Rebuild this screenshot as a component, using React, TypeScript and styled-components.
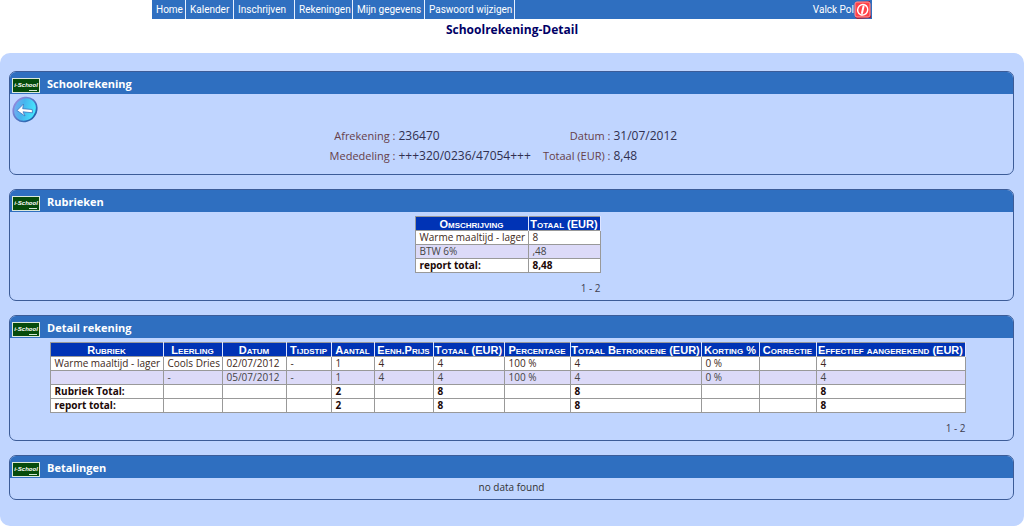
import React from "react";
import styled, { createGlobalStyle } from "styled-components";

const GlobalStyle = createGlobalStyle`
  * { box-sizing: border-box; }
  body {
    margin: 0;
    background: #fff;
    color: #333;
    font: 10px/14px "Comic Sans MS", "Open Sans", "Noto Sans", sans-serif;
  }
`;

const NavBar = styled.nav`
  display: flex;
  max-width: 720px;
  height: 19px;
  margin: 0 auto;
  background: #2f6fc0;
  color: #fff;
  font-family: "Comic Sans MS", Roboto, sans-serif;
`;

const NavLink = styled.a<{ $width: number }>`
  width: ${(p) => p.$width}px;
  padding: 0 4px;
  border-right: 1px solid #e6f0ff;
  color: #fff;
  line-height: 19px;
  text-decoration: none;
  white-space: nowrap;
`;

const User = styled.div`
  display: flex;
  align-items: center;
  margin-left: auto;
`;

const IconButton = styled.button`
  display: block;
  padding: 0;
  border: 0;
  background: none;
  cursor: pointer;
  svg { display: block; }
`;

const Title = styled.h1`
  margin: 0;
  height: 34px;
  color: #000066;
  font-size: 12px;
  line-height: 22px;
  text-align: center;
`;

const Main = styled.main`
  display: flex;
  flex-direction: column;
  gap: 14px;
  padding: 18px 10px 26px 9px;
  border-radius: 10px;
  background: #c0d5ff;
`;

const Panel = styled.section`
  overflow: hidden;
  border: 1px solid #3c5c98;
  border-radius: 7px;
`;

const PanelHeader = styled.header`
  display: flex;
  align-items: flex-end;
  gap: 7px;
  height: 22px;
  padding: 0 0 1px 2px;
  background: #2f6fc0;
`;

const PanelTitle = styled.h2`
  margin: 0;
  color: #fff;
  font-size: 11px;
  line-height: 18px;
`;

const Region = styled.div`
  display: flex;
  flex-direction: column;
  align-items: center;
  padding: 4px 8px 5px 0;
`;

const AccountBody = styled.div`
  padding: 2px 2px 8px;
`;

const Fields = styled.dl`
  display: grid;
  grid-template-columns: 66px 136px 73px 68px;
  column-gap: 3px;
  justify-content: center;
  margin: 3px 0 0;
  padding-right: 12px;
  font-size: 12px;
  line-height: 20px;
  white-space: nowrap;
`;

const Label = styled.dt`
  color: #66404a;
  font-size: 11px;
  text-align: right;
`;

const Value = styled.dd`
  margin: 0;
  color: #303050;
`;

const Table = styled.table`
  border-collapse: collapse;
  border: 1px solid #999;
  table-layout: fixed;
  width: 1px;
`;

const HeadCell = styled.th`
  height: 14px;
  padding: 0;
  border-right: 1px solid #dde4ff;
  background: #0033b5;
  color: #fff;
  font: bold 11px/12px "Liberation Sans", Arial, sans-serif;
  font-variant: small-caps;
  white-space: nowrap;
`;

const Row = styled.tr<{ $alt?: boolean; $total?: boolean }>`
  background: ${(p) => (p.$alt ? "#dcdaf8" : "#fff")};
  color: ${(p) => (p.$total ? "#200808" : p.$alt ? "#444" : "#402820")};
  font-weight: ${(p) => (p.$total ? "bold" : "normal")};
`;

const Cell = styled.td`
  height: 14px;
  padding: 0 4px;
  border: 1px solid #999;
  line-height: 13px;
  white-space: nowrap;
`;

const Report = styled.div`
  display: flex;
  flex-direction: column;
`;

const Pagination = styled.div`
  margin-top: 8px;
  text-align: right;
  color: #404050;
`;

const Empty = styled.p`
  margin: 0;
  padding: 1px 0 4px;
  line-height: 16px;
  text-align: center;
`;

const SchoolLogo = () => (
  <svg width="28" height="15" viewBox="0 0 28 15" role="img" aria-label="i-School">
    <rect x=".5" y=".5" width="27" height="14" fill="#064b0b" stroke="#dce9dc" />
    <text x="14" y="9" fill="#fff" fontSize="6" fontStyle="italic" fontWeight="bold" fontFamily="Liberation Sans, sans-serif" textAnchor="middle">i-School</text>
    <path d="M17 12.5h8" stroke="#d5e7d5" />
  </svg>
);

const BackIcon = () => (
  <svg width="26" height="27" viewBox="0 0 26 27">
    <defs>
      <linearGradient id="back-face" x1="0" y1="0" x2=".6" y2="1">
        <stop offset="0" stopColor="#8fa6f0" />
        <stop offset=".5" stopColor="#45b4ee" />
        <stop offset="1" stopColor="#45eaff" />
      </linearGradient>
      <linearGradient id="back-rim" x1="0" y1="0" x2="0" y2="1">
        <stop offset="0" stopColor="#8c8bdd" />
        <stop offset="1" stopColor="#2464ad" />
      </linearGradient>
    </defs>
    <ellipse cx="13" cy="13.5" rx="12.5" ry="11.2" transform="rotate(-50 13 13.5)" fill="url(#back-face)" stroke="url(#back-rim)" strokeWidth="1.7" />
    <path d="M11.5 8 5 14.5l8 5.5-2-4.2 9.5 1-.3-3.3-9.5-.8z" fill="#fff" stroke="#3d72bd" strokeWidth=".8" strokeLinejoin="round" />
  </svg>
);

const PowerIcon = () => (
  <svg width="18" height="19" viewBox="0 0 18 19">
    <path d="M1 2 16 1l1 17-14 1-2-2z" fill="#a91c35" />
    <rect x="1" y="2" width="15" height="15" rx="2" fill="#ff4249" stroke="#ff999c" />
    <ellipse cx="8.7" cy="9.8" rx="5" ry="5.3" transform="rotate(25 8.7 9.8)" fill="none" stroke="#fff" strokeWidth="1.4" />
    <path d="m9.5 6.5-1.5 6.5" stroke="#fff" strokeWidth="2" strokeLinecap="round" />
  </svg>
);

type ReportRow = { cells: string[]; alt?: boolean; total?: boolean };
type ReportProps = { columns: [string, number][]; rows: ReportRow[] };

const ReportTable = ({ columns, rows }: ReportProps) => (
  <Report>
    <Table>
      <colgroup>
        {columns.map(([name, width]) => <col key={name} width={width} />)}
      </colgroup>
      <thead>
        <tr>{columns.map(([name]) => <HeadCell key={name} scope="col">{name}</HeadCell>)}</tr>
      </thead>
      <tbody>
        {rows.map((row, i) => (
          <Row key={i} $alt={row.alt} $total={row.total}>
            {row.cells.map((cell, j) => <Cell key={j}>{cell}</Cell>)}
          </Row>
        ))}
      </tbody>
    </Table>
    <Pagination>1 - 2</Pagination>
  </Report>
);

const Box = ({ title, children }: { title: string; children: React.ReactNode }) => (
  <Panel>
    <PanelHeader><SchoolLogo /><PanelTitle>{title}</PanelTitle></PanelHeader>
    {children}
  </Panel>
);

const links: [string, number][] = [
  ["Home", 34], ["Kalender", 48], ["Inschrijven", 61],
  ["Rekeningen", 58], ["Mijn gegevens", 72], ["Paswoord wijzigen", 90],
];

const sections: ReportProps = {
  columns: [["Omschrijving", 113], ["Totaal (EUR)", 72]],
  rows: [
    { cells: ["Warme maaltijd - lager", "8"] },
    { cells: ["BTW 6%", ",48"], alt: true },
    { cells: ["report total:", "8,48"], total: true },
  ],
};

const details: ReportProps = {
  columns: [
    ["Rubriek", 113], ["Leerling", 59], ["Datum", 64], ["Tijdstip", 45],
    ["Aantal", 43], ["Eenh.Prijs", 59], ["Totaal (EUR)", 71], ["Percentage", 66],
    ["Totaal Betrokkene (EUR)", 131], ["Korting %", 58], ["Correctie", 57],
    ["Effectief aangerekend (EUR)", 149],
  ],
  rows: [
    { cells: ["Warme maaltijd - lager", "Cools Dries", "02/07/2012", "-", "1", "4", "4", "100 %", "4", "0 %", "", "4"] },
    { cells: ["", "-", "05/07/2012", "-", "1", "4", "4", "100 %", "4", "0 %", "", "4"], alt: true },
    { cells: ["Rubriek Total:", "", "", "", "2", "", "8", "", "8", "", "", "8"], total: true },
    { cells: ["report total:", "", "", "", "2", "", "8", "", "8", "", "", "8"], total: true },
  ],
};

export default function App() {
  return (
    <>
      <GlobalStyle />
      <NavBar>
        {links.map(([name, width]) => <NavLink key={name} href="#" $width={width}>{name}</NavLink>)}
        <User>Valck Pol<IconButton aria-label="Afmelden"><PowerIcon /></IconButton></User>
      </NavBar>
      <Title>Schoolrekening-Detail</Title>
      <Main>
        <Box title="Schoolrekening">
          <AccountBody>
            <IconButton aria-label="Terug"><BackIcon /></IconButton>
            <Fields>
              <Label>Afrekening :</Label><Value>236470</Value>
              <Label>Datum :</Label><Value>31/07/2012</Value>
              <Label>Mededeling :</Label><Value>+++320/0236/47054+++</Value>
              <Label>Totaal (EUR) :</Label><Value>8,48</Value>
            </Fields>
          </AccountBody>
        </Box>
        <Box title="Rubrieken">
          <Region><ReportTable {...sections} /></Region>
        </Box>
        <Box title="Detail rekening">
          <Region><ReportTable {...details} /></Region>
        </Box>
        <Box title="Betalingen"><Empty>no data found</Empty></Box>
      </Main>
    </>
  );
}
